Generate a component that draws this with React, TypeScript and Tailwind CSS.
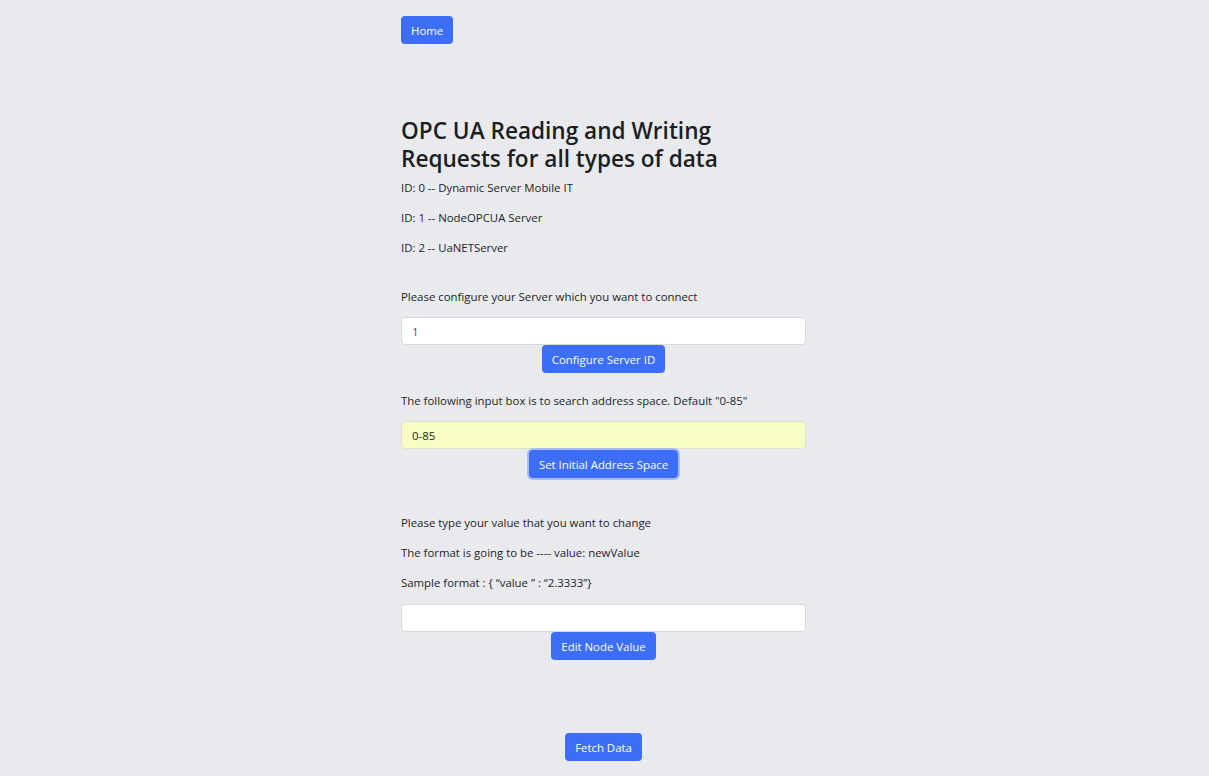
import React from "react";

const font = { fontFamily: '"Segoe UI", "Open Sans", "Noto Sans", sans-serif' };

function Btn({ children, ring }: { children: React.ReactNode; ring?: boolean }) {
  return (
    <button
      className={
        ring
          ? "h-[28px] px-[10px] pt-[1px] rounded-[4px] bg-[#3d6ef7] text-white text-[11.4px] leading-[27px] ring-2 ring-[#a9bdf5]"
          : "h-[28px] px-[10px] pt-[1px] rounded-[4px] bg-[#3d6ef7] text-white text-[11.4px] leading-[27px]"
      }
    >
      {children}
    </button>
  );
}

const P = "text-[11.4px] leading-[18px] pt-[1px]";

export default function App() {
  return (
    <div className="min-h-[776px] w-full bg-[#e9eaee] text-[#212529]" style={font}>
      <div className="mx-auto w-[407px] pt-[16px] pb-[15px]">
        <div className="flex">
          <Btn>Home</Btn>
        </div>

        <h1 className="mt-[72px] pt-[1px] text-[22.6px] leading-[28px] font-semibold text-[#1c1e21] w-[330px]">
          OPC UA Reading and Writing Requests for all types of data
        </h1>

        <p className={"mt-[5px] " + P}>ID: 0 -- Dynamic Server Mobile IT</p>
        <p className={"mt-[11px] " + P}>ID: 1 -- NodeOPCUA Server</p>
        <p className={"mt-[11px] " + P}>ID: 2 -- UaNETServer</p>

        <p className={"mt-[30px] " + P}>Please configure your Server which you want to connect</p>
        <div className="mt-[11px] w-[405px] flex flex-col items-center">
          <input
            readOnly
            value="1"
            className="w-[405px] h-[28px] rounded-[4px] border border-[#d6d8db] bg-white px-[10px] text-[11.4px] text-[#555] outline-none"
          />
          <Btn>Configure Server ID</Btn>
        </div>

        <p className={"mt-[18px] " + P}>
          The following input box is to search address space. Default "0-85"
        </p>
        <div className="mt-[11px] w-[405px] flex flex-col items-center">
          <input
            readOnly
            value="0-85"
            className="w-[405px] h-[28px] rounded-[4px] border border-[#dfe2c8] bg-[#f8fdc3] px-[10px] text-[11.4px] text-[#212529] outline-none"
          />
          <div className="mt-[1px]">
            <Btn ring>Set Initial Address Space</Btn>
          </div>
        </div>

        <p className={"mt-[35px] " + P}>Please type your value that you want to change</p>
        <p className={"mt-[11px] " + P}>The format is going to be ---- value: newValue</p>
        <p className={"mt-[11px] " + P}>Sample format : {"{"} “value ” : “2.3333”{"}"}</p>
        <div className="mt-[12px] w-[405px] flex flex-col items-center">
          <input
            readOnly
            value=""
            className="w-[405px] h-[28px] rounded-[4px] border border-[#d6d8db] bg-white px-[10px] text-[11.4px] outline-none"
          />
          <Btn>Edit Node Value</Btn>
        </div>

        <div className="mt-[73px] w-[405px] flex justify-center">
          <Btn>Fetch Data</Btn>
        </div>
      </div>
    </div>
  );
}
